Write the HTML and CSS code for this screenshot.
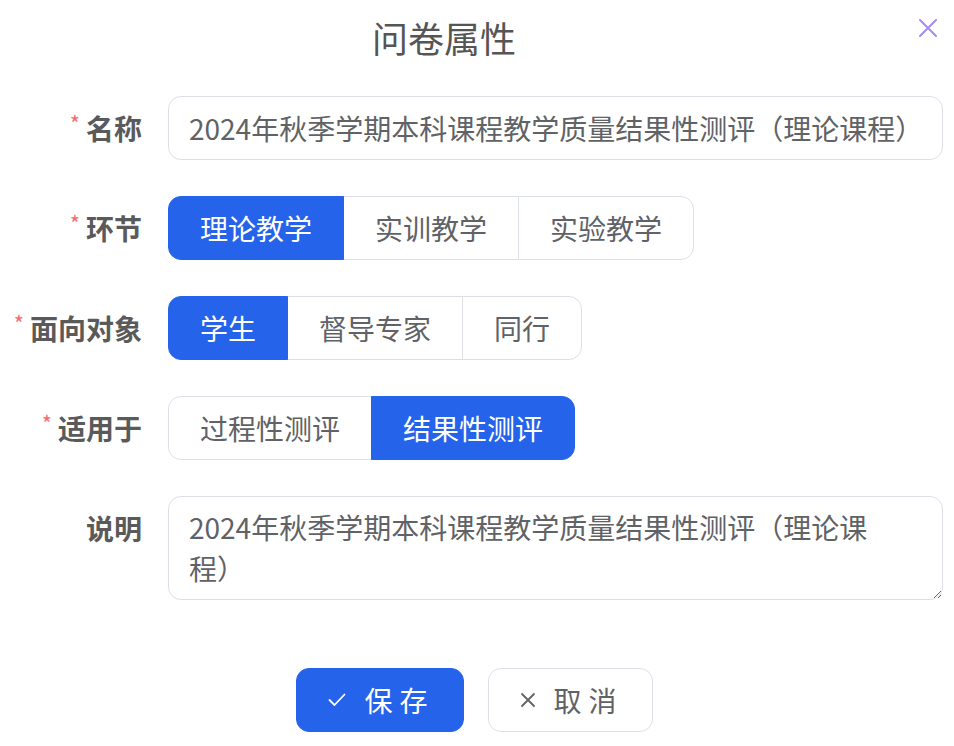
FILE: index.html
```html
<!DOCTYPE html>
<html lang="zh-CN">
<head>
<meta charset="utf-8">
<title>问卷属性</title>
<link rel="stylesheet" href="styles.css">
</head>
<body>
<div class="dialog">
  <header class="dlg-header">
    <h2 class="dlg-title">问卷属性</h2>
    <button class="dlg-close" type="button" aria-label="关闭">
      <svg width="20" height="20" viewBox="0 0 20 20" aria-hidden="true"><path d="M2 2 L18 18 M18 2 L2 18" stroke="currentColor" stroke-width="2" stroke-linecap="round" fill="none"/></svg>
    </button>
  </header>

  <form class="form">
    <div class="row">
      <label class="label"><span class="req">*</span>名称</label>
      <div class="control"><input class="input" type="text" value="2024年秋季学期本科课程教学质量结果性测评（理论课程）"></div>
    </div>

    <div class="row">
      <label class="label"><span class="req">*</span>环节</label>
      <div class="control">
        <div class="seg">
          <button type="button" class="seg-btn active">理论教学</button>
          <button type="button" class="seg-btn">实训教学</button>
          <button type="button" class="seg-btn">实验教学</button>
        </div>
      </div>
    </div>

    <div class="row">
      <label class="label"><span class="req">*</span>面向对象</label>
      <div class="control">
        <div class="seg">
          <button type="button" class="seg-btn active">学生</button>
          <button type="button" class="seg-btn">督导专家</button>
          <button type="button" class="seg-btn">同行</button>
        </div>
      </div>
    </div>

    <div class="row">
      <label class="label"><span class="req">*</span>适用于</label>
      <div class="control">
        <div class="seg">
          <button type="button" class="seg-btn">过程性测评</button>
          <button type="button" class="seg-btn active">结果性测评</button>
        </div>
      </div>
    </div>

    <div class="row">
      <label class="label">说明</label>
      <div class="control"><textarea class="textarea" rows="2">2024年秋季学期本科课程教学质量结果性测评（理论课程）</textarea></div>
    </div>
  </form>

  <footer class="footer">
    <button type="button" class="btn btn-primary">
      <svg class="btn-icon" width="18" height="14" viewBox="0 0 18 14" aria-hidden="true"><path d="M1.5 7 L6.5 12 L16.5 1.5" stroke="currentColor" stroke-width="1.8" fill="none" stroke-linecap="round" stroke-linejoin="round"/></svg>
      <span class="btn-text">保存</span>
    </button>
    <button type="button" class="btn btn-default">
      <svg class="btn-icon" width="16" height="16" viewBox="0 0 16 16" aria-hidden="true"><path d="M2 2 L14 14 M14 2 L2 14" stroke="currentColor" stroke-width="1.8" fill="none" stroke-linecap="round"/></svg>
      <span class="btn-text">取消</span>
    </button>
  </footer>
</div>
</body>
</html>
```

FILE: styles.css
```css
* { box-sizing: border-box; }

html, body {
  margin: 0;
  padding: 0;
  background: #ffffff;
}

body {
  font-family: "Noto Sans CJK SC", "Noto Sans", sans-serif;
  color: #606266;
  width: 954px;
}

.dialog {
  width: 954px;
}

.dlg-header {
  display: flex;
  height: 78px;
}

.dlg-title {
  flex: 1;
  margin: 0;
  font-size: 36px;
  font-weight: 400;
  line-height: 74px;
  text-align: center;
  color: #555;
}

.dlg-close {
  width: 66px;
  height: 40px;
  padding: 18px 16px 0 0;
  border: 0;
  background: transparent;
  color: #a58cf2;
  display: flex;
  justify-content: flex-end;
  align-items: flex-start;
  cursor: pointer;
}

.form {
  display: flex;
  flex-direction: column;
  gap: 36px;
  padding: 18px 11px 0 0;
}

.row {
  display: grid;
  grid-template-columns: 142px 1fr;
  column-gap: 26px;
  align-items: start;
}

.label {
  display: flex;
  justify-content: flex-end;
  align-items: center;
  height: 64px;
  font-size: 28px;
  font-weight: 700;
  color: #5a5a5a;
  white-space: nowrap;
}

.req {
  color: #f56c6c;
  font-size: 22px;
  font-weight: 400;
  margin-right: 6px;
  align-self: flex-start;
  line-height: 28px;
  margin-top: 12px;
}

.input {
  display: block;
  width: 100%;
  height: 64px;
  padding: 0 12px 0 20px;
  border: 1px solid #dcdfe6;
  border-radius: 13px;
  font-family: inherit;
  font-size: 28px;
  color: #606266;
  background: #fff;
  outline: none;
}

.seg {
  display: inline-flex;
}

.seg-btn {
  height: 64px;
  padding: 0 31px;
  border: 1px solid #dcdfe6;
  margin-left: -1px;
  background: #fff;
  font-family: inherit;
  font-size: 28px;
  color: #606266;
  cursor: pointer;
}

.seg-btn:first-child {
  margin-left: 0;
  border-radius: 13px 0 0 13px;
}

.seg-btn:last-child {
  border-radius: 0 13px 13px 0;
}

.seg-btn.active {
  background: #2563eb;
  border-color: #2563eb;
  color: #fff;
  position: relative;
}

.textarea {
  display: block;
  width: 100%;
  height: 104px;
  padding: 10px 40px 10px 20px;
  border: 1px solid #dcdfe6;
  border-radius: 13px;
  font-family: inherit;
  font-size: 28px;
  line-height: 41px;
  color: #606266;
  resize: vertical;
  outline: none;
}

.footer {
  display: flex;
  justify-content: center;
  gap: 24px;
  margin-top: 68px;
  padding-right: 5px;
}

.btn {
  display: inline-flex;
  align-items: center;
  justify-content: center;
  height: 64px;
  padding: 0 28px 0 31px;
  border-radius: 13px;
  font-family: inherit;
  font-size: 28px;
  cursor: pointer;
}

.btn-icon {
  margin-right: 18px;
}

.btn-text {
  letter-spacing: 7px;
}

.btn-primary {
  background: #2563eb;
  border: 1px solid #2563eb;
  color: #fff;
}

.btn-default {
  background: #fff;
  border: 1px solid #dcdfe6;
  color: #606266;
}
```
